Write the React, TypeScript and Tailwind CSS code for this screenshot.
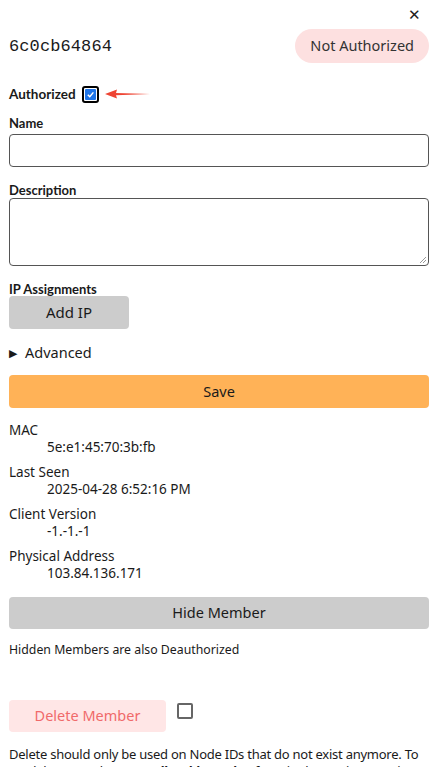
import React from "react";

export default function App() {
  return (
    <div className="w-[437px] h-[767px] overflow-hidden bg-white text-[#1a1a1a] relative font-['Noto_Sans',sans-serif]">
      <div className="px-[9px] pr-[8px]">
        <div className="flex justify-end pt-[5px] pr-[8px] h-[24px]">
          <span className="text-[15px] leading-[18px] text-[#222]">✕</span>
        </div>
        <div className="flex items-center justify-between h-[38px] mt-[4px]">
          <span className="font-['Liberation_Mono',monospace] text-[17px] tracking-[0.1px]">6c0cb64864</span>
          <span className="bg-[#fde0e0] rounded-full px-[15px] h-[34px] -mt-[3px] flex items-center text-[14.5px] text-[#333]">Not Authorized</span>
        </div>
        <div className="flex items-center mt-[18px] h-[20px]">
          <span className="font-['Lato',sans-serif] font-bold text-[13.5px]">Authorized</span>
          <span className="ml-[6px] w-[17px] h-[17px] border-[2px] border-black rounded-[3px] flex items-center justify-center">
            <span className="w-[11px] h-[11px] bg-[#1e74e8] rounded-[1px] flex items-center justify-center">
              <svg width="9" height="9" viewBox="0 0 10 10"><path d="M2 5.2 L4.2 7.4 L8.2 2.6" stroke="white" strokeWidth="1.6" fill="none" /></svg>
            </span>
          </span>
          <svg width="46" height="12" viewBox="0 0 46 12" className="ml-[6px]">
            <path d="M0 6 L12 1.5 L11 5 L45 6 L11 7.2 L12 10.5 Z" fill="#ee4433" />
          </svg>
        </div>
        <div className="font-['Lato',sans-serif] font-bold text-[13px] mt-[11px] leading-[16px]">Name</div>
        <div className="mt-[3px] h-[33px] border border-[#555] rounded-[4px]"></div>
        <div className="font-['Lato',sans-serif] font-bold text-[13px] mt-[15px] leading-[16px]">Description</div>
        <div className="mt-[0px] h-[68px] border border-[#555] rounded-[4px] relative">
          <svg width="8" height="8" viewBox="0 0 8 8" className="absolute right-[1px] bottom-[1px]">
            <path d="M7 1 L1 7 M7 4 L4 7" stroke="#999" strokeWidth="1" />
          </svg>
        </div>
        <div className="font-['Lato',sans-serif] font-bold text-[13px] mt-[15px] leading-[16px]">IP Assignments</div>
        <div className="-mt-[1px] w-[120px] h-[33px] bg-[#cccccc] rounded-[4px] flex items-center justify-center text-[15px]">Add IP</div>
        <div className="flex items-center mt-[13px] h-[22px] text-[14.5px]">
          <span className="text-[11px] mr-[8px]">▶</span>
          <span>Advanced</span>
        </div>
        <div className="mt-[11px] h-[33px] bg-[#ffb257] rounded-[4px] flex items-center justify-center text-[14.5px]">Save</div>
        <div className="mt-[14px] text-[13.5px] leading-[17px]">
          {[
            ["MAC", "5e:e1:45:70:3b:fb"],
            ["Last Seen", "2025-04-28 6:52:16 PM"],
            ["Client Version", "-1.-1.-1"],
            ["Physical Address", "103.84.136.171"],
          ].map(([k, v]) => (
            <div key={k} className="mb-[8px]">
              <div>{k}</div>
              <div className="pl-[38px]">{v}</div>
            </div>
          ))}
        </div>
        <div className="mt-[15px] h-[32px] bg-[#cccccc] rounded-[4px] flex items-center justify-center text-[14.5px]">Hide Member</div>
        <div className="mt-[12px] text-[12.3px] leading-[18px]">Hidden Members are also Deauthorized</div>
        <div className="flex items-start mt-[41px]">
          <div className="w-[157px] h-[32px] bg-[#ffe6e6] rounded-[4px] flex items-center justify-center text-[14.5px] text-[#f06a6a]">Delete Member</div>
          <div className="ml-[11px] mt-[3px] w-[16px] h-[16px] border-[2px] border-[#666] rounded-[2px]"></div>
        </div>
        <div className="mt-[14px] text-[13px] tracking-[-0.25px] leading-[17px] whitespace-nowrap">
          <div>Delete should only be used on Node IDs that do not exist anymore. To</div>
          <div>un-delete, use the <b><i>manually add member</i></b> form in the Settings section.</div>
        </div>
      </div>
    </div>
  );
}
